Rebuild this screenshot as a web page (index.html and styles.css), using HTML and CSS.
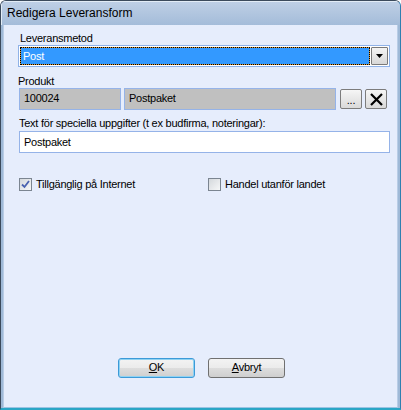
FILE: index.html
```html
<!DOCTYPE html>
<html>
<head>
<meta charset="utf-8">
<link rel="stylesheet" href="styles.css">
</head>
<body>
<div class="window">
  <div class="titlebar">Redigera Leveransform</div>
  <div class="client">
    <div class="label l1">Leveransmetod</div>
    <div class="select">
      <div class="select-value"><div class="focus">Post</div></div>
      <div class="select-btn">
        <svg width="7" height="4" viewBox="0 0 7 4"><path d="M0 0H7L3.5 4Z" fill="#000"/></svg>
      </div>
    </div>
    <div class="label l2">Produkt</div>
    <div class="prod-row">
      <div class="ro f1">100024</div>
      <div class="ro f2">Postpaket</div>
      <div class="sbtn dots">...</div>
      <div class="sbtn">
        <svg width="15" height="15" viewBox="0 0 15 15"><path d="M2 2L13 13M13 2L2 13" stroke="#000" stroke-width="2.2" fill="none"/></svg>
      </div>
    </div>
    <div class="label l3">Text för speciella uppgifter (t ex budfirma, noteringar):</div>
    <div class="input">Postpaket</div>
    <div class="checks">
      <div class="check c1">
        <span class="box"><svg width="9" height="9" viewBox="0 0 9 9"><path d="M1 4.5L3.5 7L8 1" stroke="#4a62b0" stroke-width="1.8" fill="none"/></svg></span>
        <span>Tillgänglig på Internet</span>
      </div>
      <div class="check c2">
        <span class="box"></span>
        <span>Handel utanför landet</span>
      </div>
    </div>
    <div class="buttons">
      <div class="btn ok"><u>O</u>K</div>
      <div class="btn"><u>A</u>vbryt</div>
    </div>
  </div>
</div>
</body>
</html>
```
FILE: styles.css
```css
* { box-sizing: border-box; }
html, body { margin: 0; padding: 0; background: #ffffff; }
body { font-family: "Liberation Sans", Arial, sans-serif; font-size: 11px; letter-spacing: -0.25px; color: #000; }

.window {
  width: 401px;
  height: 410px;
  display: flex;
  flex-direction: column;
  border: 1px solid #3b4a5c;
  border-right-color: #2f7fb0;
  border-bottom: 2px solid #2aa6c6;
  border-radius: 6px 6px 0 0;
  overflow: hidden;
  background: #9fb9d7;
}

.titlebar {
  height: 24px;
  flex: none;
  padding: 5px 0 0 6px;
  font-size: 12px;
  letter-spacing: 0;
  line-height: 15px;
  background: linear-gradient(#bfd0e6, #a4bcd9);
  box-shadow: inset 1px 1px 0 #e2ecf6;
}

.client {
  flex: 1;
  display: flex;
  flex-direction: column;
  margin: 0 2px 0 2px;
  border-left: 1px solid #b9cde6;
  border-right: 1px solid #b9cde6;
  border-bottom: 1px solid #9cc3e3;
  background: #e6edfc;
  padding: 0 0 0 14px;
}

.label { line-height: 13px; height: 13px; }
.l1 { margin: 7px 0 0 2px; }
.l2 { margin: 8px 0 0 0; }
.l3 { margin: 7px 0 0 1px; }

.select {
  width: 372px;
  height: 22px;
  border: 1px solid #8fb2e8;
  background: #fff;
  display: flex;
  padding: 1px;
  gap: 1px;
}
.select-value {
  flex: 1;
  background: #d8922e;
}
.focus {
  height: 100%;
  border: 1px dotted #000;
  background: #3399ff;
  background-clip: padding-box;
  color: #fff;
  padding: 2px 0 0 2px;
  line-height: 13px;
}
.select-btn {
  width: 17px;
  border: 1px solid #7a7a7a;
  border-radius: 1px;
  background: linear-gradient(#f4f4f4, #d8d8d8);
  display: flex;
  align-items: center;
  justify-content: center;
}

.prod-row {
  display: flex;
  align-items: center;
  height: 22px;
}
.ro {
  height: 22px;
  border: 1px solid #95b3e8;
  background: #c0c0c0;
  padding: 3px 0 0 4px;
  line-height: 13px;
}
.f1 { width: 102px; margin-left: 1px; }
.f2 { width: 212px; margin-left: 3px; }
.sbtn {
  width: 22px;
  height: 20px;
  margin-left: 4px;
  border: 1px solid #7c7c7c;
  border-radius: 2px;
  background: linear-gradient(#f6f6f6, #d9d9d9);
  display: flex;
  align-items: center;
  justify-content: center;
}
.sbtn + .sbtn { margin-left: 3px; }
.dots { align-items: flex-end; padding-bottom: 3px; line-height: 9px; }

.input {
  margin-top: 1px;
  margin-left: 1px;
  width: 371px;
  height: 22px;
  border: 1px solid #95b3e8;
  background: #fff;
  padding: 4px 0 0 4px;
  line-height: 13px;
}

.checks {
  display: flex;
  margin-top: 24px;
  margin-left: 1px;
  height: 14px;
}
.check { display: flex; align-items: center; gap: 4px; line-height: 13px; }
.c1 { width: 189px; }
.box {
  width: 13px;
  height: 13px;
  border: 1px solid #7b8591;
  background: linear-gradient(135deg, #d4d8dc, #f6f7f8);
  display: flex;
  align-items: center;
  justify-content: center;
}

.buttons {
  margin-top: auto;
  margin-bottom: 29px;
  display: flex;
  gap: 13px;
  padding-left: 100px;
}
.btn {
  width: 77px;
  height: 20px;
  border: 1px solid #707070;
  border-radius: 3px;
  background: linear-gradient(#f3f3f3 0%, #ebebeb 50%, #dddddd 51%, #cfcfcf 100%);
  text-align: center;
  line-height: 17px;
}
.btn u { text-decoration: underline; text-underline-offset: 1px; }
.ok { border-color: #3c9ad8; box-shadow: inset 0 0 0 1px #8fd2f2; }
```
